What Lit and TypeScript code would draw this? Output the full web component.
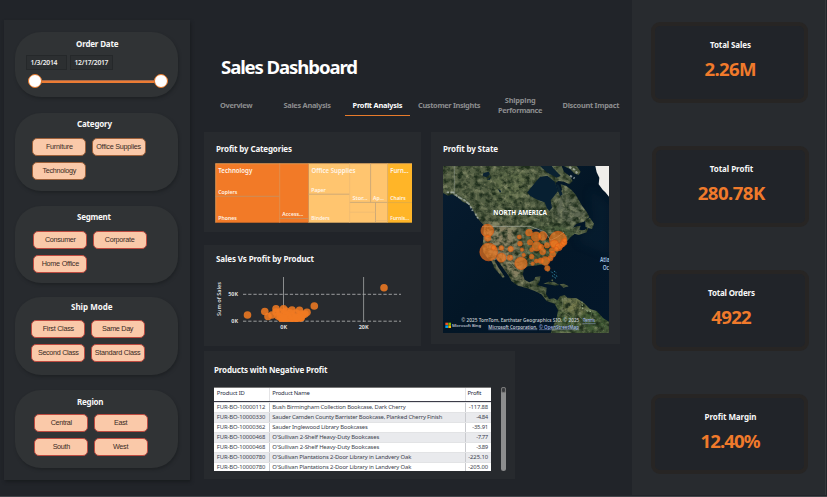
import { LitElement, html, svg, css } from "lit";
import { customElement, property } from "lit/decorators.js";
import { styleMap } from "lit/directives/style-map.js";

/** A line of text tracked so that it takes exactly `w` pixels. */
@customElement("fit-label")
class FitLabel extends LitElement {
  @property() text = "";
  @property({ type: Number }) w = 0;

  static styles = css`
    :host { display: inline-block; white-space: nowrap; text-align: left; }
    .run { display: inline-block; }
  `;

  render() {
    return html`<span class="run">${this.text}</span>`;
  }

  updated() {
    const run = this.renderRoot.querySelector(".run") as HTMLElement;
    run.style.letterSpacing = "0px";
    const natural = run.getBoundingClientRect().width;
    const gap = (this.w - natural) / Math.max(1, this.text.length - 1);
    run.style.letterSpacing = gap + "px";
    this.style.width = this.w + "px";
  }
}

const fit = (text: string, w: number) => html`<fit-label .text=${text} .w=${w}></fit-label>`;

interface Slicer {
  title: string; tw: number; tx: number; th: number;
  top: number; x: number; y: number; tone: string;
  items: [string, number][];
}

const slicers: Slicer[] = [
  { title: "Category", tw: 35, tx: 62.5, th: 22.5, top: 16, x: 17.9, y: 2, tone: "brown",
    items: [["Furniture", 27], ["Office Supplies", 45], ["Technology", 34]] },
  { title: "Segment", tw: 34, tx: 62.5, th: 23.5, top: 15, x: 18.9, y: 1.7, tone: "red",
    items: [["Consumer", 31], ["Corporate", 30], ["Home Office", 37.5]] },
  { title: "Ship Mode", tw: 41.5, tx: 56.5, th: 20.8, top: 14, x: 16.9, y: 1.9, tone: "red",
    items: [["First Class", 31.5], ["Same Day", 31.5], ["Second Class", 41], ["Standard Class", 46]] },
  { title: "Region", tw: 26.5, tx: 62.5, th: 23.7, top: 15.5, x: 19.9, y: 0, tone: "red",
    items: [["Central", 21.5], ["East", 13.5], ["South", 17.5], ["West", 15.5]] },
];

const kpis = [
  { name: "Total Sales", nw: 41, value: "2.26M", vw: 52, top: 22, left: 19 },
  { name: "Total Profit", nw: 43.5, value: "280.78K", vw: 67.5, top: 43.5, left: 20 },
  { name: "Total Orders", nw: 47, value: "4922", vw: 40.5, top: 43.5, left: 20 },
  { name: "Profit Margin", nw: 52, value: "12.40%", vw: 60, top: 43, left: 19 },
];

const rows: [string, string, number, string, number][] = [
  ["FUR-BO-10000112", "Bush Birmingham Collection Bookcase, Dark Cherry", 133.5, "-117.88", 19.5],
  ["FUR-BO-10000330", "Sauder Camden County Barrister Bookcase, Planked Cherry Finish", 170, "-4.84", 12],
  ["FUR-BO-10000362", "Sauder Inglewood Library Bookcases", 95.5, "-35.91", 16],
  ["FUR-BO-10000468", "O'Sullivan 2-Shelf Heavy-Duty Bookcases", 107, "-7.77", 12],
  ["FUR-BO-10000468", "O'Sullivan 2-Shelf Heavy-Duty Bookcases", 107, "-3.89", 12],
  ["FUR-BO-10000780", "O'Sullivan Plantations 2-Door Library in Landvery Oak", 139, "-225.10", 20],
  ["FUR-BO-10000780", "O'Sullivan Plantations 2-Door Library in Landvery Oak", 139, "-205.00", 20],
];

const dots: [number, number][] = [
  [43.5, 70], [60.8, 66.5], [64, 71.5], [68, 70], [72, 63.7], [79.5, 63.7], [88, 65], [95.5, 65.3], [103, 67.3], [110.3, 61],
  [180, 42.7], [72, 67], [74, 71], [76, 67], [78, 74], [80, 69], [82, 66], [84, 73], [86, 68], [90, 74], [92, 68], [97, 69],
  [99, 70], [94, 73], [79, 75], [82, 75.5], [85, 75.5], [88, 75.3], [91, 75], [94, 74.5], [97, 72.5], [76, 72], [101, 69],
  [83, 70], [88, 71], [92, 72], [80, 73], [97, 73],
];

const bubbles: [number, number, number][] = [
  [172, 227, 19], [173, 250, 9], [176, 291, 26.5], [191, 278, 7], [214, 279, 7], [214, 308, 13.5], [242, 282, 8], [240, 308, 8],
  [273, 325, 18.5], [268, 246, 6], [270, 266, 7], [276, 284, 5], [281, 300, 5], [297, 233, 10], [300, 262, 8], [305, 284, 6],
  [305, 305, 7], [318, 245, 14], [338, 243, 13], [320, 274, 14], [333, 276, 8], [338, 290, 9], [351, 271, 8], [308, 326, 5],
  [319, 318, 6], [332, 317, 8], [346, 318, 13], [352, 340, 8], [361, 310, 8], [368, 298, 9], [366, 286, 8], [384, 255, 26],
  [373, 267, 12], [386, 276, 11], [397, 268, 8], [402, 262, 9], [404, 256, 6], [379, 282, 7],
];

@customElement("app-root")
class AppRoot extends LitElement {
  static styles = css`
    :host {
      display: grid; grid-template-columns: 190px 442px 194px; box-sizing: border-box;
      width: 827px; height: 497px; overflow: hidden; position: relative;
      background: #212429; color: #fff; border-bottom: 1px solid #45474b;
      font-family: "Noto Sans", "Open Sans", sans-serif; font-size: 8px; line-height: 10px;
    }
    fit-label { flex: none; }
    svg { display: block; }
    .title { font-weight: 700; color: #f8f8f8; }

    .side { margin: 20px 0 0 4px; width: 186px; height: 460px; background: #272a2e; box-shadow: 1px 2px 3px #191c1f; display: flex; flex-direction: column; }
    .slicer { margin-left: 10.5px; width: 163.5px; background: #303335; border-radius: 26px; box-sizing: border-box; box-shadow: 1px 2px 3px #1f2225; }
    .dates { margin-top: 12px; height: 65px; padding: 7px 0 0 11.5px; }
    .dates .title { padding-left: 50px; height: 10px; display: flex; }
    .inputs { display: flex; gap: 3px; margin-top: 6px; }
    .input { height: 15px; box-sizing: border-box; border: 1px solid #25282a; background: #2c2f31; display: flex; align-items: center; padding-left: 3.5px; font-weight: 600; font-size: 6.8px; color: #eee; }
    .from { width: 41px; } .to { width: 43px; }
    .slider { display: flex; align-items: center; margin: 3.5px 0 0 1.6px; height: 15px; }
    .knob { width: 14px; height: 14px; box-sizing: border-box; border-radius: 50%; background: #fff; border: 1px solid #e87828; }
    .rail { width: 112.5px; height: 3px; background: #ec7c34; border-top: 1px solid #a96a4a; box-sizing: border-box; }
    .choice { height: 77.5px; }
    .choice .title { display: flex; align-items: center; }
    .opts { display: grid; grid-template-columns: 54px 54px; gap: 6px 5.3px; }
    .opt { height: 18px; box-sizing: border-box; border-radius: 5px; background: #fac9a9; color: #38291f; display: flex; align-items: center; justify-content: center; font-family: "Liberation Sans", sans-serif; font-size: 7.2px; border: 1px solid #a6512f; }
    .red .opt { border-color: #bd4a40; }
    .brown .opt { border-color: #9c603a; }

    .main { padding-left: 14px; display: flex; flex-direction: column; }
    .h1 { font-size: 18.6px; line-height: 24px; font-weight: 700; margin: 54.5px 0 0 17px; display: flex; }
    .tabs { display: flex; height: 22px; margin-top: 15.5px; padding-left: 16px; font-weight: 700; font-size: 7.4px; color: #8c8d8e; align-items: center; line-height: 10px; }
    .tab { display: flex; flex-direction: column; align-items: center; }
    .t2 { margin-left: 31px; }
    .t3 { color: #fff; margin-left: 14px; width: 65px; box-sizing: border-box; height: 22px; justify-content: center; border-bottom: 1.5px solid #e77b2b; padding-top: 1.5px; }
    .t4 { margin-left: 8px; } .t5 { margin-left: 17.5px; } .t6 { margin-left: 20px; }
    .cards { display: grid; grid-template-columns: 217px 189px; column-gap: 10px; margin-top: 16px; }
    .col { display: flex; flex-direction: column; gap: 13px; }
    .card { background: #272a2e; box-sizing: border-box; padding: 12px 0 0 12px; }
    .card .title { display: flex; height: 10px; }
    .c1 { height: 100px; } .c2 { height: 101px; padding-top: 9px; }
    .c2 .title { margin-bottom: -19px; }
    .c3 { height: 212px; }
    .c4 { width: 311px; height: 128px; margin-top: 5px; padding: 14px 0 0 10px; }
    .tree { margin: 9px 0 0 -1px; }
    .scatter { margin-left: -12px; }
    .map { margin: 12px 0 0 0; }
    .tablewrap { display: flex; margin-top: 12px; gap: 10px; }
    .table { width: 277px; height: 84px; background: #fff; color: #3c3f4d; font-size: 5.9px; overflow: hidden; box-sizing: border-box; border-top: 1px solid #777; }
    .row { display: grid; grid-template-columns: 55.5px 196px 25.5px; height: 10px; box-sizing: border-box; border-top: 1px solid #e2e3e5; }
    .row:nth-child(odd) { background: #e9eaed; }
    .row.head { height: 14px; border-top: none; border-bottom: 1px solid #3c3c48; color: #252a3c; background: #fff; }
    .cell { display: flex; align-items: center; padding: 0 0 1px 2.8px; border-right: 1px solid #c9cace; overflow: hidden; line-height: 9px; }
    .head .cell { padding-bottom: 3px; border-color: #e4e4e6; }
    .num { justify-content: flex-end; padding: 0 2.8px 1px 0; border: none; }
    .head .num { justify-content: flex-start; padding-left: 2px; }
    .bar { width: 5px; height: 84px; border-radius: 2.5px; background: #8c8d8e; }
    .thumb { width: 5px; height: 5.5px; border-radius: 2px; background: #3a3c3f; border: 1px solid #777; box-sizing: border-box; }

    .kpis { background: #282b2f; border-right: 1px solid #34383b; height: 495px; display: flex; flex-direction: column; }
    .kpi { width: 157px; height: 80.5px; flex: none; box-sizing: border-box; border: 4px solid #272524; border-radius: 9px; background: #212429; display: flex; flex-direction: column; align-items: center; padding: 14px 0 0 2px; }
    .value { font-weight: 700; font-size: 18.6px; line-height: 24px; color: #f07a2b; margin-top: 7px; display: flex; }
  `;

  slicer(s: Slicer) {
    return html`<section class="slicer choice ${s.tone}" style=${styleMap({ marginTop: s.top + "px" })}>
      <div class="title" style=${styleMap({ height: s.th + "px", paddingLeft: s.tx + "px" })}>${fit(s.title, s.tw)}</div>
      <div class="opts" style=${styleMap({ paddingLeft: s.x + "px", paddingTop: s.y + "px" })}>
        ${s.items.map(([t, w]) => html`<div class="opt">${fit(t, w)}</div>`)}
      </div>
    </section>`;
  }

  label(x: number, y: number, w: number, t: string, size: number, weight = 600, fill = "#fff6ea") {
    return svg`<text x=${x} y=${y} textLength=${w} lengthAdjust="spacingAndGlyphs" font-size=${size} font-weight=${weight} fill=${fill}>${t}</text>`;
  }

  treemap() {
    return html`<svg class="tree" width="197" height="60" viewBox="215 163 197 60">
      <rect x="215.5" y="163.5" width="93" height="59.2" fill="#f27a27"/>
      <rect x="308.5" y="163.5" width="79" height="59.2" fill="#ffc56f"/>
      <rect x="387.5" y="163.5" width="24.5" height="59.2" fill="#ffb528"/>
      <path d="M215.5 163.7H412M215.7 163.5V222.7" stroke="#efb06a" stroke-width=".6"/>
      <path d="M215.5 196.3H279.5M279.5 218.5H308.5" stroke="#c69060" stroke-width=".9"/>
      <path d="M279.7 163.5V222.7M308.5 163.5V222.7" stroke="#dc9354" stroke-width=".8"/>
      <path d="M308.5 194.2H349.7M349.7 202.4H387.5M370.6 163.5V202.4M375.5 202.4V222" stroke="#c9a777" stroke-width=".9"/>
      <path d="M349.7 163.5V222.7M349.7 212.2H375.5M375.5 220.6H387.5M387.6 163.5V222.7" stroke="#edba74" stroke-width=".8"/>
      <path d="M387.5 202.6H412" stroke="#dca947" stroke-width=".8"/>
      ${this.label(218.3, 173.2, 34, "Technology", 7.2)}
      ${this.label(311.5, 173.2, 44, "Office Supplies", 7.2)}
      ${this.label(390.3, 173.2, 18.3, "Furn...", 7.2)}
      ${this.label(218.3, 194.2, 19, "Copiers", 5.8)}
      ${this.label(218.3, 220.2, 18.5, "Phones", 5.8)}
      ${this.label(282.3, 216.2, 21, "Access...", 5.8)}
      ${this.label(311.3, 192.2, 14.5, "Paper", 5.8)}
      ${this.label(311.3, 220.2, 18.5, "Binders", 5.8)}
      ${this.label(352.5, 200.2, 15, "Stor...", 5.8)}
      ${this.label(373, 200.2, 11, "Ap...", 5.8)}
      ${this.label(390.3, 200.2, 15.3, "Chairs", 5.8)}
      ${this.label(390.3, 220.2, 19, "Furnis...", 5.8)}
    </svg>`;
  }

  scatter() {
    return html`<svg class="scatter" width="217" height="101" viewBox="0 0 217 101">
      <defs><clipPath id="plot"><path d="M39 30H200V76.8H39Z"/></clipPath></defs>
      <path d="M79.5 32V77M159.6 32V77" stroke="#8b8d8e"/>
      <path d="M39 49.3H197M39 76.2H197" stroke="#a8a9aa" stroke-width=".9" stroke-dasharray="3.3 1.9"/>
      <g clip-path="url(#plot)">${dots.map(([x, y]) => svg`<circle cx=${x} cy=${y} r="3.8" fill="#f27a22" fill-opacity=".86"/>`)}</g>
      <g transform="rotate(-90 17 71)">${this.label(17, 71, 34, "Sum of Sales", 5.8, 600, "#ddd")}</g>
      ${this.label(24.3, 51.1, 9.7, "50K", 5.8, 700, "#ddd")}
      ${this.label(27.3, 78, 6.7, "0K", 5.8, 700, "#ddd")}
      ${this.label(76.3, 84, 6.8, "0K", 5.8, 700, "#ddd")}
      ${this.label(154.7, 84, 10, "20K", 5.8, 700, "#ddd")}
    </svg>`;
  }

  map() {
    return html`<svg class="map" width="166" height="167" viewBox="39 33 498 501" preserveAspectRatio="none">
      <defs>
        <filter id="terrain" x="0" y="0" width="100%" height="100%" color-interpolation-filters="sRGB">
          <feTurbulence type="fractalNoise" baseFrequency=".06 .07" numOctaves="4" seed="23" result="n"/>
          <feColorMatrix in="n" type="matrix" values="0 0 0 0 .12  0 0 0 0 .18  0 0 0 0 .11  2.2 1.2 0 0 -1.4" result="d"/>
          <feColorMatrix in="n" type="matrix" values="0 0 0 0 .56  0 0 0 0 .58  0 0 0 0 .44  0 0 1.8 0 -.8" result="l"/>
          <feComposite in="d" in2="SourceAlpha" operator="in" result="m"/>
          <feComposite in="l" in2="SourceAlpha" operator="in" result="k"/>
          <feMerge><feMergeNode in="SourceGraphic"/><feMergeNode in="k"/><feMergeNode in="m"/></feMerge>
        </filter>
        <filter id="soft" x="-30%" y="-30%" width="160%" height="160%"><feGaussianBlur stdDeviation="13"/></filter>
        <linearGradient id="sea" x1="0" y1="0" x2="1" y2="1">
          <stop offset="0" stop-color="#071c30"/><stop offset=".5" stop-color="#031626"/><stop offset="1" stop-color="#04172a"/>
        </linearGradient>
        <clipPath id="shore">
          <path d="M39 33H395L402 50 420 64 428 78 418 88 402 80 385 78 376 84 380 100 388 115 396 104 392 88 408 92 424 104 436 118 446 134 456 152 470 170 478 186 462 200 440 206 428 218 440 214 452 212 448 224 462 226 476 216 470 232 446 240 434 236 420 248 410 260 408 272 392 276 386 288 378 300 364 314 354 324 356 334 360 346 354 352 348 344 342 330 328 330 312 332 294 334 282 342 278 358 284 374 298 382 312 376 316 366 332 364 328 380 322 390 336 394 350 398 348 418 358 432 372 430 382 436 390 424 404 420 412 428 440 430 462 444 480 462 500 468 520 490 537 500V534H362L372 508 380 488 384 466 374 446 366 444 350 438 334 418 314 408 292 400 264 392 244 378 236 362 224 346 210 326 200 312 194 316 204 336 214 350 224 366 218 368 204 352 192 338 186 320 172 308 160 292 157 272 160 252 160 230 164 214 150 198 138 184 126 160 114 148 98 140 82 126 66 118 54 122 39 114Z"/>
          <path d="M466 196L480 188 492 206 486 222 466 216ZM340 386L356 380 374 382 388 390 376 392 356 388ZM388 388L402 386 416 394 400 398ZM362 376L368 372 370 380ZM400 33H440L452 50 446 60 434 56 420 42Z"/>
        </clipPath>
      </defs>
      <rect x="39" y="33" width="498" height="501" fill="url(#sea)"/>
      <path d="M480 100L537 150V300L440 260 490 200Z" fill="#092940" opacity=".25" filter="url(#soft)"/>
      <g clip-path="url(#shore)">
        <g filter="url(#terrain)">
          <rect x="39" y="33" width="498" height="501" fill="#535f44"/>
          <g filter="url(#soft)">
            <path d="M150 200L260 210 270 330 300 400 210 350 150 270Z" fill="#8a8163"/>
            <path d="M39 33H120L150 130 90 140 39 110Z" fill="#596346"/>
            <path d="M180 60L300 40 290 130 200 150Z" fill="#5f6c4a"/>
            <path d="M290 220L440 210 400 310 350 340 300 320Z" fill="#435838"/>
            <path d="M390 100L480 180 440 220 360 180Z" fill="#5e6853"/>
            <path d="M370 430H537V534H370Z" fill="#3c5830"/>
            <path d="M400 430L480 440 450 480 400 470Z" fill="#7a7e50"/>
          </g>
        </g>
      </g>
      <path d="M300 102L316 82 330 66 352 62 374 80 384 108 372 124 362 136 366 158 358 168 350 158 344 142 322 134 300 122 292 112Z" fill="#071f31"/>
      <path d="M330 33L350 52 380 68 392 62 370 40 366 33ZM378 86L386 90 398 118 390 124ZM160 54L176 50 180 58 170 66 158 64ZM170 74L182 66 180 74ZM204 102L214 108 210 114Z" fill="#0b2231"/>
      <path d="M302 226L322 220 338 226 328 230 312 230ZM330 240L336 250 328 256ZM342 234L354 240 350 254 344 246ZM356 258L370 250 368 256 356 262Z" fill="#0c2030"/>
      <path d="M50 112L70 112 84 126 104 136 118 148 128 168 M136 176L144 190" fill="none" stroke="#bcc5bf" stroke-width="5" stroke-dasharray="7 4 13 5" opacity=".7"/>
      <path d="M418 36L434 44 444 58 M420 62L434 70" fill="none" stroke="#c3cac5" stroke-width="6" stroke-dasharray="7 5" opacity=".65"/>
      <path d="M496 33H537V125L526 112 518 104 506 88 508 68 500 52Z" fill="#f0eeea"/>
      <path d="M73 33V120L90 126 112 142" stroke="#87928a" stroke-width="1.7" fill="none"/>
      <path d="M156 214H300L322 222 346 232 362 256 382 246 402 232" stroke="#a9b0a2" stroke-width="2" fill="none"/>
      <path d="M188 310L212 318 238 322 256 340 276 350 M398 430L396 468 420 482 426 516 M450 444L450 486 470 506 M488 464L478 500" stroke="#99a28a" stroke-width="1.2" fill="none" opacity=".7"/>
      <path d="M364 350L372 358 384 366 M366 362L378 370 M372 348L380 354" stroke="#2f86a2" stroke-width="3" stroke-dasharray="5 4" fill="none"/>
      <path d="M456 440L458 462 M470 468L488 470" stroke="#c5ddae" stroke-width="3" stroke-dasharray="3 6" fill="none"/>
      ${bubbles.map(([x, y, r]) => svg`<circle cx=${x} cy=${y} r=${r} fill="#f5791f" fill-opacity=".68" stroke="#d95b16" stroke-opacity=".8" stroke-width="2.4"/>`)}
      ${this.label(190, 181, 161, "NORTH AMERICA", 19.5, 700, "#ffffff")}
      ${this.label(510, 322, 29, "Atla", 18.5, 600, "#a3c4e0")}
      ${this.label(518, 346, 19, "Oc", 18.5, 600, "#a3c4e0")}
      <path d="M46 503h8v7h-8z" fill="#f25022"/><path d="M55 503h8v7h-8z" fill="#7fba00"/>
      <path d="M46 511h8v8h-8z" fill="#00a4ef"/><path d="M55 511h8v8h-8z" fill="#ffb900"/>
      ${this.label(66, 516, 87, "Microsoft Bing", 12.5, 500, "#d8dde0")}
      ${this.label(94, 502, 354, "© 2025 TomTom, Earthstar Geographics SIO, © 2025", 13.5, 500, "#d0d5d8")}
      ${this.label(175, 521, 147, "Microsoft Corporation,", 13.5, 500, "#d7dce0")}
      <path d="M457 506H497M327 524H447M175 524H322" stroke="#9aa8cc" stroke-width="1.5"/>
      ${this.label(459, 502, 36, "Terms", 13.5, 500, "#9eb4ee")}
      ${this.label(327, 521, 120, "© OpenStreetMap", 13.5, 500, "#a9baec")}
    </svg>`;
  }

  render() {
    return html`
      <aside class="side">
        <section class="slicer dates">
          <div class="title">${fit("Order Date", 42.5)}</div>
          <div class="inputs">
            <div class="input from">${fit("1/3/2014", 27)}</div>
            <div class="input to">${fit("12/17/2017", 34)}</div>
          </div>
          <div class="slider"><div class="knob"></div><div class="rail"></div><div class="knob"></div></div>
        </section>
        ${slicers.map((s) => this.slicer(s))}
      </aside>
      <main class="main">
        <div class="h1">${fit("Sales Dashboard", 137)}</div>
        <nav class="tabs">
          <div class="tab">${fit("Overview", 32.5)}</div>
          <div class="tab t2">${fit("Sales Analysis", 47.5)}</div>
          <div class="tab t3">${fit("Profit Analysis", 50)}</div>
          <div class="tab t4">${fit("Customer Insights", 62.5)}</div>
          <div class="tab t5">${fit("Shipping", 31)}${fit("Performance", 44.5)}</div>
          <div class="tab t6">${fit("Discount Impact", 57)}</div>
        </nav>
        <div class="cards">
          <div class="col">
            <section class="card c1"><div class="title">${fit("Profit by Categories", 76)}</div>${this.treemap()}</section>
            <section class="card c2"><div class="title">${fit("Sales Vs Profit by Product", 98)}</div>${this.scatter()}</section>
          </div>
          <section class="card c3"><div class="title">${fit("Profit by State", 55)}</div>${this.map()}</section>
        </div>
        <section class="card c4">
          <div class="title">${fit("Products with Negative Profit", 113.5)}</div>
          <div class="tablewrap">
            <div class="table">
              <div class="row head">
                <div class="cell">${fit("Product ID", 28)}</div>
                <div class="cell">${fit("Product Name", 37.5)}</div>
                <div class="cell num">${fit("Profit", 14)}</div>
              </div>
              ${rows.map(([id, name, nw, profit, pw]) => html`<div class="row">
                <div class="cell">${fit(id, 48.5)}</div>
                <div class="cell">${fit(name, nw)}</div>
                <div class="cell num">${fit(profit, pw)}</div>
              </div>`)}
            </div>
            <div class="bar"><div class="thumb"></div></div>
          </div>
        </section>
      </main>
      <aside class="kpis">
        ${kpis.map((k) => html`<section class="kpi" style=${styleMap({ marginTop: k.top + "px", marginLeft: k.left + "px" })}>
          <div class="title">${fit(k.name, k.nw)}</div>
          <div class="value">${fit(k.value, k.vw)}</div>
        </section>`)}
      </aside>
    `;
  }
}
